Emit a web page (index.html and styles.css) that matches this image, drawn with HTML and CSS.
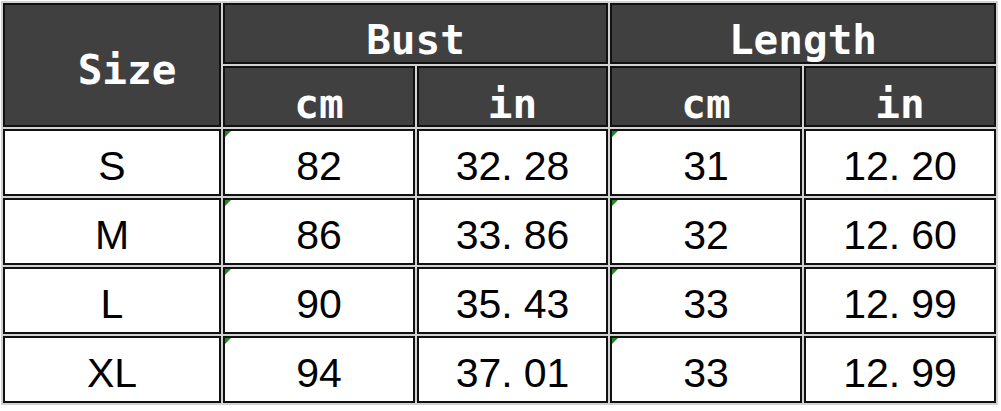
FILE: index.html
```html
<!DOCTYPE html>
<html lang="en">
<head>
<meta charset="utf-8">
<title>Size chart</title>
<link rel="stylesheet" href="styles.css">
</head>
<body>
<div class="sheet">
  <div class="cell head size">Size</div>
  <div class="cell head group bust">Bust</div>
  <div class="cell head group length">Length</div>
  <div class="cell head unit">cm</div>
  <div class="cell head unit">in</div>
  <div class="cell head unit">cm</div>
  <div class="cell head unit">in</div>

  <div class="cell data">S</div>
  <div class="cell data flag">82</div>
  <div class="cell data">32<span class="dot">.</span>28</div>
  <div class="cell data flag">31</div>
  <div class="cell data">12<span class="dot">.</span>20</div>

  <div class="cell data">M</div>
  <div class="cell data flag">86</div>
  <div class="cell data">33<span class="dot">.</span>86</div>
  <div class="cell data flag">32</div>
  <div class="cell data">12<span class="dot">.</span>60</div>

  <div class="cell data">L</div>
  <div class="cell data flag">90</div>
  <div class="cell data">35<span class="dot">.</span>43</div>
  <div class="cell data flag">33</div>
  <div class="cell data">12<span class="dot">.</span>99</div>

  <div class="cell data">XL</div>
  <div class="cell data flag">94</div>
  <div class="cell data">37<span class="dot">.</span>01</div>
  <div class="cell data flag">33</div>
  <div class="cell data">12<span class="dot">.</span>99</div>
</div>
</body>
</html>
```

FILE: styles.css
```css
html, body {
  margin: 0;
  padding: 0;
  background: #ffffff;
}

.sheet {
  display: grid;
  grid-template-columns: 218px 192px 191px 192px 192px;
  grid-template-rows: 61px 61px 67px 67px 67px 67px;
  gap: 2px;
  padding: 2px;
  margin: 1px;
  width: max-content;
  background: #d2d2d2;
}

.cell {
  position: relative;
  box-sizing: border-box;
  border: 2px solid #111111;
  display: flex;
  align-items: center;
  justify-content: center;
  white-space: nowrap;
}

.head {
  background: #404040;
  color: #ffffff;
  font-family: "DejaVu Sans Mono", monospace;
  font-weight: bold;
  font-size: 41px;
  padding-top: 8px;
}

.size {
  grid-row: span 2;
  padding-top: 10px;
  padding-left: 30px;
}

.group {
  grid-column: span 2;
  padding-top: 12px;
}

.unit {
  padding-top: 14px;
}

.data {
  background: #ffffff;
  color: #000000;
  font-family: "Liberation Sans", Arial, sans-serif;
  font-size: 41px;
  padding-top: 8px;
}

.dot {
  margin-right: 0.27em;
}

.flag::before {
  content: "";
  position: absolute;
  top: 0;
  left: 0;
  width: 0;
  height: 0;
  border-top: 6px solid #1f8a1f;
  border-right: 6px solid transparent;
}
```
